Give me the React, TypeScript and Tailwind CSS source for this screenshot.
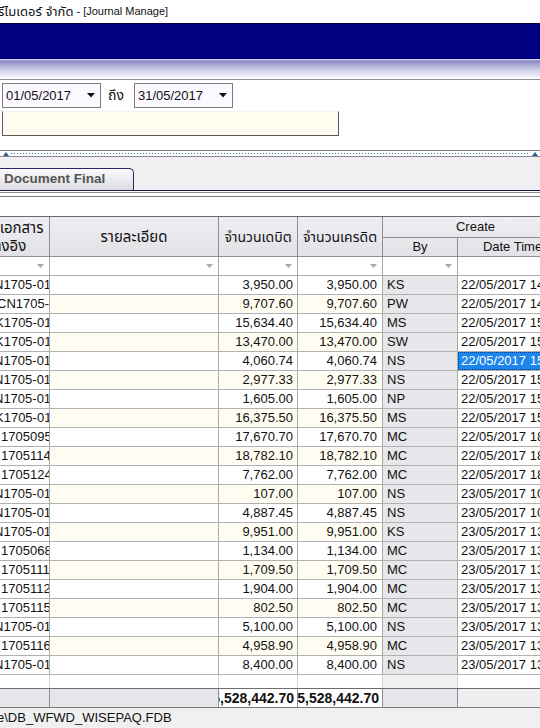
import React from "react";

type Row = {
  doc: string;
  sh: string;
  amt: string;
  by: string;
  dt: string;
  sel?: boolean;
};

const rows: Row[] = [
  { doc: "N1705-0121", sh: "-ml-[6px]", amt: "3,950.00", by: "KS", dt: "22/05/2017 14:12:05" },
  { doc: "CN1705-001", sh: "-ml-[3px]", amt: "9,707.60", by: "PW", dt: "22/05/2017 14:40:31" },
  { doc: "K1705-0107", sh: "-ml-[5px]", amt: "15,634.40", by: "MS", dt: "22/05/2017 15:02:44" },
  { doc: "K1705-0108", sh: "-ml-[5px]", amt: "13,470.00", by: "SW", dt: "22/05/2017 15:10:19" },
  { doc: "N1705-0122", sh: "-ml-[6px]", amt: "4,060.74", by: "NS", dt: "22/05/2017 15:21:50", sel: true },
  { doc: "N1705-0123", sh: "-ml-[6px]", amt: "2,977.33", by: "NS", dt: "22/05/2017 15:25:02" },
  { doc: "N1705-0124", sh: "-ml-[6px]", amt: "1,605.00", by: "NP", dt: "22/05/2017 15:33:47" },
  { doc: "K1705-0109", sh: "-ml-[5px]", amt: "16,375.50", by: "MS", dt: "22/05/2017 15:48:13" },
  { doc: "1705095", sh: "ml-[1px]", amt: "17,670.70", by: "MC", dt: "22/05/2017 18:05:26" },
  { doc: "1705114", sh: "ml-[1px]", amt: "18,782.10", by: "MC", dt: "22/05/2017 18:11:39" },
  { doc: "1705124", sh: "ml-[1px]", amt: "7,762.00", by: "MC", dt: "22/05/2017 18:20:08" },
  { doc: "N1705-0125", sh: "-ml-[6px]", amt: "107.00", by: "NS", dt: "23/05/2017 10:03:55" },
  { doc: "N1705-0126", sh: "-ml-[6px]", amt: "4,887.45", by: "NS", dt: "23/05/2017 10:14:21" },
  { doc: "N1705-0127", sh: "-ml-[6px]", amt: "9,951.00", by: "KS", dt: "23/05/2017 13:01:40" },
  { doc: "1705068", sh: "ml-[1px]", amt: "1,134.00", by: "MC", dt: "23/05/2017 13:05:12" },
  { doc: "1705111", sh: "ml-[1px]", amt: "1,709.50", by: "MC", dt: "23/05/2017 13:08:33" },
  { doc: "1705112", sh: "ml-[1px]", amt: "1,904.00", by: "MC", dt: "23/05/2017 13:10:57" },
  { doc: "1705115", sh: "ml-[1px]", amt: "802.50", by: "MC", dt: "23/05/2017 13:14:06" },
  { doc: "N1705-0128", sh: "-ml-[6px]", amt: "5,100.00", by: "NS", dt: "23/05/2017 13:17:48" },
  { doc: "1705116", sh: "ml-[1px]", amt: "4,958.90", by: "MC", dt: "23/05/2017 13:20:30" },
  { doc: "N1705-0129", sh: "-ml-[6px]", amt: "8,400.00", by: "NS", dt: "23/05/2017 13:25:14" },
];

function DropArrow() {
  return (
    <svg width="8" height="5" viewBox="0 0 8 5" className="shrink-0">
      <path d="M0 0h8L4 4.5z" fill="#111" />
    </svg>
  );
}

function FilterArrow() {
  return (
    <svg width="7" height="4" viewBox="0 0 7 4">
      <path d="M0 0h7L3.5 4z" fill="#a8a8a8" />
    </svg>
  );
}

function Combo({ value }: { value: string }) {
  return (
    <div className="w-[99px] h-[25px] border border-[#7d7d7d] bg-[#fbf8ff] flex items-center pl-[3px] pr-[5px] justify-between">
      <span>{value}</span>
      <DropArrow />
    </div>
  );
}

export default function App() {
  return (
    <div className="w-[540px] h-[728px] overflow-hidden bg-white text-[13px] text-[#111] font-['Liberation_Sans','Noto_Sans_Thai','Noto_Sans','Tlwg_Typo',sans-serif]">
      {/* title bar */}
      <div className="h-[23px] flex items-center whitespace-nowrap -ml-[2px]">
        <span className="text-[13px]">รีไมเดอร์ จำกัด</span>
        <span className="text-[11px] ml-[3px]">- [Journal Manage]</span>
      </div>
      <div className="h-[36px] bg-[#000080] border-t border-[#000040]" />
      <div className="h-[21px] bg-[linear-gradient(to_bottom,#e4e4f4_0px,#8a8ac6_2px,#c8c8e6_10px,#ffffff_20px)] border-b border-[#8e8e8e]" />

      {/* filters */}
      <div className="h-[70px] pt-[3px] pl-[2px]">
        <div className="flex items-center">
          <Combo value="01/05/2017" />
          <span className="ml-[7px] mr-[10px] text-[14px]">ถึง</span>
          <Combo value="31/05/2017" />
        </div>
        <div className="mt-[3px] w-[337px] h-[25px] bg-[#fffdf0] border-x border-b border-[#595959] border-t border-t-[#f4f4f4]" />
      </div>

      {/* splitter */}
      <div className="h-[7px] border-t border-[#7a7a7a] border-b border-b-[#8a8a8a] relative flex items-center">
        <div className="w-full h-px mx-[11px] bg-[repeating-linear-gradient(to_right,#3f7aa8_0px,#3f7aa8_1px,transparent_1px,transparent_3px)]" />
        <div className="absolute left-[3px] top-[1px] w-0 h-0 border-x-[3px] border-x-transparent border-b-[4px] border-b-[#245d9a]" />
        <div className="absolute right-[2px] top-[1px] w-0 h-0 border-x-[3px] border-x-transparent border-b-[4px] border-b-[#245d9a]" />
      </div>

      {/* tab strip */}
      <div className="h-[33px] bg-[#f0eff2] flex items-end">
        <div className="w-[134px] h-[22px] rounded-tr-[5px] border-t border-r border-[#272766] bg-[linear-gradient(to_bottom,#fafafc,#dcdbe0)] flex items-center pl-[4px] font-bold text-[#555] text-[13.5px]">
          Document Final
        </div>
      </div>
      <div className="h-[7px] border-t border-[#1c1c58] flex flex-col">
        <div className="h-px mt-px bg-[#8d8d8d]" />
        <div className="h-px mt-[3px] bg-[#7a7a7a]" />
      </div>
      <div className="h-[19px]" />

      {/* grid */}
      <div className="-ml-[40px] w-[620px] border-t border-[#6c6c6c]">
        {/* header */}
        <div className="flex h-[40px] bg-[linear-gradient(to_bottom,#efeef2,#e2e1e6)] border-b border-[#8f8f8f] leading-[18px]">
          <div className="w-[90px] border-r border-[#8f8f8f] flex flex-col items-center justify-center text-center whitespace-nowrap overflow-hidden text-[15px] pl-[4px]">
            <span>เลขที่เอกสาร</span>
            <span>อ้างอิง</span>
          </div>
          <div className="w-[169px] border-r border-[#8f8f8f] flex items-center justify-center text-[15px]">รายละเอียด</div>
          <div className="w-[79px] border-r border-[#8f8f8f] flex items-center justify-center whitespace-nowrap text-[14px]">จำนวนเดบิต</div>
          <div className="w-[85px] border-r border-[#8f8f8f] flex items-center justify-center whitespace-nowrap text-[14px]">จำนวนเครดิต</div>
          <div className="w-[185px] flex flex-col">
            <div className="h-[21px] border-b border-[#8f8f8f] flex items-end justify-center pb-px">Create</div>
            <div className="flex flex-1">
              <div className="w-[75px] border-r border-[#8f8f8f] flex items-center justify-center">By</div>
              <div className="w-[110px] border-r border-[#8f8f8f] flex items-center justify-center">Date Time</div>
            </div>
          </div>
        </div>

        {/* filter row */}
        <div className="flex h-[19px] bg-white border-b border-[#a9a9a9]">
          <div className="w-[90px] border-r border-[#a9a9a9] flex items-center justify-end pr-[5px]"><FilterArrow /></div>
          <div className="w-[169px] border-r border-[#a9a9a9] flex items-center justify-end pr-[5px]"><FilterArrow /></div>
          <div className="w-[79px] border-r border-[#a9a9a9] flex items-center justify-end pr-[5px]"><FilterArrow /></div>
          <div className="w-[85px] border-r border-[#a9a9a9] flex items-center justify-end pr-[5px]"><FilterArrow /></div>
          <div className="w-[75px] border-r border-[#a9a9a9] flex items-center justify-end pr-[5px]"><FilterArrow /></div>
          <div className="w-[110px] border-r border-[#a9a9a9]" />
        </div>

        {/* rows */}
        {rows.map((r, i) => {
          const alt = i % 2 === 1 ? "bg-[#fffdf1]" : "bg-white";
          return (
            <div key={i} className="flex h-[19px] border-b border-[#b1b1b1] whitespace-nowrap">
              <div className="w-[90px] border-r border-[#a9a9a9] bg-white overflow-hidden pl-[40px] flex items-center">
                <span className={r.sh}>{r.doc}</span>
              </div>
              <div className={`w-[169px] border-r border-[#a9a9a9] ${alt}`} />
              <div className={`w-[79px] border-r border-[#a9a9a9] ${alt} flex items-center justify-end pr-[4px]`}>{r.amt}</div>
              <div className={`w-[85px] border-r border-[#a9a9a9] ${alt} flex items-center justify-end pr-[5px]`}>{r.amt}</div>
              <div className="w-[75px] border-r border-[#a9a9a9] bg-[#e7e6ea] flex items-center pl-[4px]">{r.by}</div>
              <div className="w-[110px] border-r border-[#a9a9a9] bg-white overflow-hidden flex items-center">
                <span
                  className={
                    r.sel
                      ? "h-full w-full flex items-center pl-[3px] bg-[#1c86ee] text-white outline-1 outline-dotted outline-offset-[-1px] outline-[#0a3d80]"
                      : "pl-[3px]"
                  }
                >
                  {r.dt}
                </span>
              </div>
            </div>
          );
        })}

        {/* filler */}
        <div className="flex h-[14px] border-b border-[#6c6c6c]">
          <div className="w-[90px] border-r border-[#d4d4d4]" />
          <div className="w-[169px] border-r border-[#d4d4d4]" />
          <div className="w-[79px] border-r border-[#d4d4d4]" />
          <div className="w-[85px] border-r border-[#d4d4d4]" />
          <div className="w-[75px] border-r border-[#d4d4d4] bg-[#f1f0f3]" />
          <div className="w-[110px] border-r border-[#d4d4d4]" />
        </div>

        {/* footer totals */}
        <div className="flex h-[19px] border-b border-[#7a7a7a] font-bold whitespace-nowrap text-[14px]">
          <div className="w-[90px] border-r border-[#8f8f8f] bg-[#e6e5e9]" />
          <div className="w-[169px] border-r border-[#8f8f8f] bg-[#e6e5e9]" />
          <div className="w-[79px] border-r border-[#8f8f8f] bg-white overflow-hidden flex items-center justify-end pr-[3px]">
            <span>25,528,442.70</span>
          </div>
          <div className="w-[85px] border-r border-[#8f8f8f] bg-white overflow-hidden flex items-center justify-end pr-[3px]">
            <span>25,528,442.70</span>
          </div>
          <div className="w-[75px] border-r border-[#8f8f8f] bg-[#e6e5e9]" />
          <div className="w-[110px] border-r border-[#8f8f8f] bg-[#eeedf0]" />
        </div>
      </div>

      {/* status bar */}
      <div className="h-[20px] bg-[#f0f0f0] flex items-center whitespace-nowrap">
        <span className="-ml-[3px]">e\DB_WFWD_WISEPAQ.FDB</span>
      </div>
    </div>
  );
}
